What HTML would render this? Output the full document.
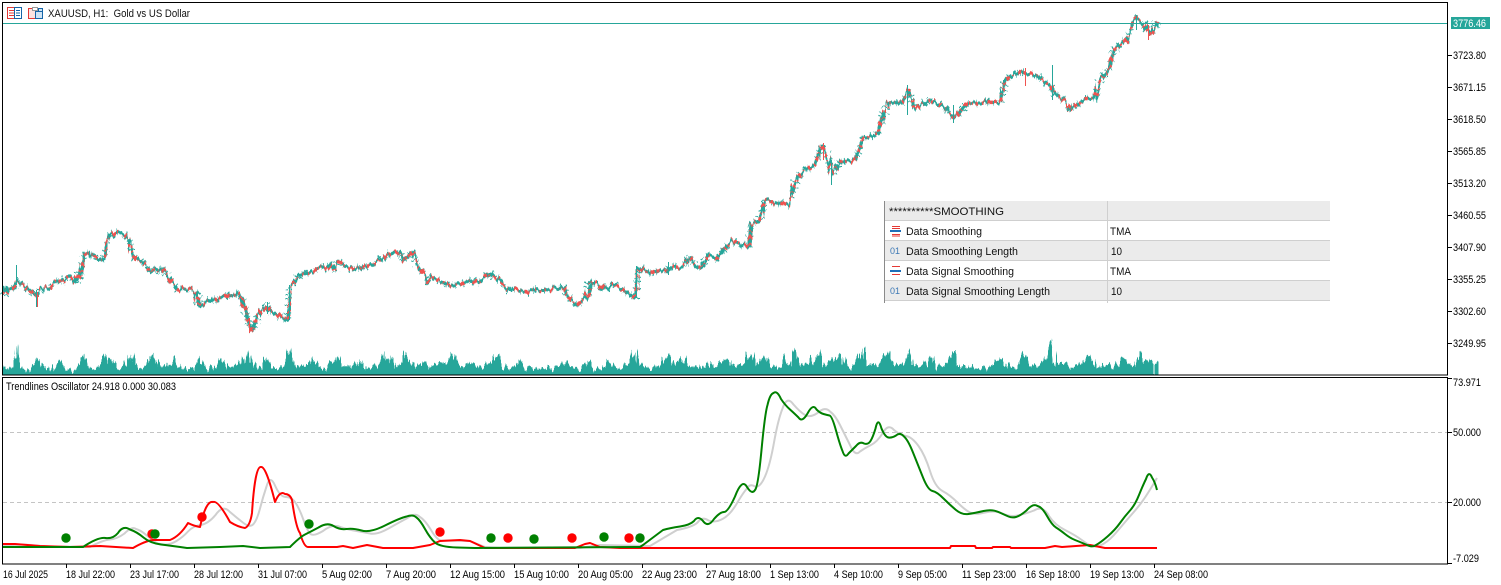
<!DOCTYPE html>
<html><head><meta charset="utf-8"><style>
html,body{margin:0;padding:0;background:#fff}
svg{display:block;font-family:"Liberation Sans",sans-serif}
text{font-size:11px;fill:#000}
.t{font-size:11px;fill:#111}
</style></head><body>
<svg width="1501" height="585" viewBox="0 0 1501 585" xmlns="http://www.w3.org/2000/svg">
<defs>
<filter id="jv" filterUnits="userSpaceOnUse" x="0" y="300" width="1300" height="100" color-interpolation-filters="sRGB">
<feTurbulence type="fractalNoise" baseFrequency="0.42 0.015" numOctaves="2" seed="4" result="n"/>
<feDisplacementMap in="SourceGraphic" in2="n" scale="13" xChannelSelector="A" yChannelSelector="G"/>
</filter>
<filter id="jp" filterUnits="userSpaceOnUse" x="0" y="0" width="1300" height="360" color-interpolation-filters="sRGB">
<feTurbulence type="fractalNoise" baseFrequency="0.3 0.012" numOctaves="2" seed="9" result="n"/>
<feDisplacementMap in="SourceGraphic" in2="n" scale="9" xChannelSelector="A" yChannelSelector="G"/>
</filter>
<clipPath id="mc"><rect x="3" y="3" width="1444" height="372"/></clipPath>
<polyline id="pr" fill="none" stroke-linejoin="bevel" points="3,295 6,290 14,288 17,283 22,283 30,291 36,296 40,289 50,288 55,283 60,282 70,276 75,283 78,278 82,263 84,254 92,254 100,260 105,258 107,241 110,234 118,232 125,235 130,242 132,252 135,258 142,262 148,268 152,272 155,268 165,270 170,280 178,290 183,288 190,289 197,292 199,305 210,302 220,298 228,296 240,295 243,302 246,312 249,326 252,332 257,316 262,308 265,305 270,312 280,317 287,320 289,300 290,285 297,280 300,275 312,272 318,268 323,268 330,265 335,272 338,262 345,266 355,270 370,265 380,260 388,255 395,252 400,252 403,262 413,252 417,265 425,275 428,282 432,278 445,283 452,285 462,282 470,280 480,282 490,273 495,278 500,280 503,285 510,290 530,290 543,290 563,287 567,297 577,305 587,297 590,283 598,283 603,290 613,285 623,290 635,298 637,268 647,273 658,270 667,273 670,267 682,268 690,257 697,267 703,267 708,255 717,258 728,245 733,241 748,247 751,226 760,220 765,200 780,203 790,205 797,178 805,170 815,165 822,145 830,165 832,175 840,162 855,160 863,138 878,133 887,103 900,102 908,90 915,110 930,100 945,108 955,118 965,104 985,102 1000,103 1005,80 1020,72 1035,75 1050,85 1055,95 1065,100 1070,110 1085,100 1095,98 1100,80 1110,68 1115,50 1125,40 1135,18 1145,25 1152,35 1157,23"/>
</defs>
<rect width="1501" height="585" fill="#fff"/>

<!-- volume -->
<g clip-path="url(#mc)">
<polygon filter="url(#jv)" fill="#26a69a" points="3,395 3,370 12,366 15,358 16,344 18,358 22,368 30,370 34,364 37,356 41,364 48,370 55,368 61,359 66,368 75,370 80,362 83,355 88,366 95,368 102,362 107,353 112,364 120,370 126,362 128,355 130,362 132,353 136,368 146,366 150,360 153,355 158,366 165,368 172,362 175,357 180,368 190,370 196,362 199,356 203,366 212,368 218,364 222,358 228,368 236,366 241,360 243,354 246,364 249,352 252,362 260,368 265,362 267,357 272,368 282,368 288,358 290,349 294,362 300,368 308,366 313,357 318,368 326,368 334,360 337,355 342,366 350,366 356,364 360,359 366,368 374,366 380,362 383,353 388,364 392,356 396,368 400,362 405,351 410,362 416,366 424,364 430,368 438,362 446,362 452,352 456,362 464,366 472,364 480,368 490,362 497,353 503,366 512,370 520,358 525,368 535,370 545,366 553,368 565,360 570,368 580,371 590,360 596,370 605,366 610,360 616,368 628,366 636,348 639,364 648,368 658,366 668,356 672,366 683,357 688,366 698,368 707,362 714,368 722,364 727,356 732,366 742,366 752,352 757,366 765,358 770,368 778,368 785,355 790,366 795,350 800,364 810,366 818,350 822,364 830,362 841,352 846,368 855,366 863,348 868,364 878,366 887,351 892,366 900,366 905,360 910,345 914,366 925,366 931,355 936,368 946,364 955,350 960,366 970,366 980,368 990,366 1002,358 1008,368 1018,366 1025,353 1031,368 1040,364 1046,358 1052,338 1055,362 1062,362 1070,366 1080,366 1090,355 1095,368 1105,364 1115,366 1125,358 1132,366 1140,353 1146,362 1152,358 1157,363 1157,395"/>
</g>

<!-- price -->
<g filter="url(#jp)">
<use href="#pr" stroke="#26a69a" stroke-width="7" stroke-dasharray="1 4 1 8 1 6 1 3"/>
<use href="#pr" stroke="#26a69a" stroke-width="3"/>
<use href="#pr" stroke="#ef5350" stroke-width="3.500" stroke-dasharray="3 3 2 4 4 3 1 5"/>
</g>
<path fill="none" stroke="#26a69a" stroke-width="1" d="M16.500 265V285M36.500 290V307M289.500 285V320M636.500 266V298M1052.500 65V100M1136.500 15V30M831.500 160V185M907.500 85V115M953.500 105V123M668.500 262V275M267.500 302V314"/>
<path fill="none" stroke="#ef5350" stroke-width="1" d="M249.500 318V333M37.500 292V307M823.500 143V160M1025.500 68V86M1148.500 25V40"/>

<!-- current price line -->
<line x1="2" y1="23.500" x2="1448" y2="23.500" stroke="#26a69a"/>

<!-- levels -->
<path stroke="#c4c4c4" stroke-dasharray="4 3" d="M3 432.500H1448M3 502.500H1448"/>

<!-- oscillator lines -->
<path fill="none" stroke="#cfcfcf" stroke-width="2" stroke-linejoin="round" d="M3 546 Q20 544 30 545 Q40 546 50 546.500 L90 547 Q103 540 110 539.500 Q117 539 124.500 533.500 Q132 526 136 529 Q140 530 145 534 Q150 538 153.500 541 Q157 544 163.500 544.500 Q170 545 176.500 541 Q183 537 188 531.500 Q193 526 200.500 525 Q208 524 215.500 515 Q223 504 230 512 Q237 518 243.500 523 Q250 528 253.500 524 Q257 520 260 508.500 Q263 497 266.500 486.500 Q270 474 275 485.500 Q280 497 286 497 Q292 497 296 503.500 Q300 510 303.500 520 Q307 530 310 533.500 Q313 537 323 531 Q333 523 341.500 527.500 Q350 530 356.500 531 Q363 532 370 533.500 Q377 535 388.500 528.500 Q400 522 407.500 518 Q415 512 420 517 Q425 520 431 530 Q437 540 441 540.500 L470 541 L485 547 L500 548 L580 548 L600 545 L650 546 L677 530 Q693 527 697.500 522.500 Q702 516 708.500 520.500 Q715 523 722.500 519 Q730 515 736.500 504 Q743 493 746.500 489 Q750 483 755 486.500 Q760 488 765 476.500 Q770 465 774 442.500 Q778 420 782.500 408.500 Q787 395 793.500 404.500 Q800 412 805 415 Q810 418 817.500 413 Q825 406 830 411.500 Q835 415 840 425 Q845 435 850 445 Q855 457 860 451.500 Q865 448 871 445 Q877 442 882.500 433.500 Q888 423 894 430 Q900 435 906 436 Q912 437 918.500 446 Q925 455 930 471 Q935 487 942.500 491 Q950 495 957.500 502.500 Q965 510 970 512.500 Q975 515 985 512.500 Q995 510 1002.500 513.500 Q1010 517 1017.500 515.500 Q1025 514 1034 510.500 Q1043 505 1049 516 Q1055 525 1065 530 Q1075 535 1082.500 540.500 Q1090 546 1094 546.500 Q1098 547 1104 543.500 Q1110 540 1117.500 531 Q1125 522 1132.500 513.500 Q1140 505 1145 497.500 Q1150 490 1157 478"/>
<path fill="none" stroke="#ff0000" stroke-width="2" stroke-linejoin="round" d="M3 544 L15 544 L40 546 L70 547 L100 546 L133 548 Q145 541 153 540 L170 540 Q180 536 188 523 Q194 526 200 527 Q206 500 213 502 Q218 500 230 522 Q238 527 245 528 Q250 526 252 513 Q255 466 261 467 Q266 466 275 502 Q280 490 285 494 Q290 494 292 500 Q296 528 300 533 Q304 547 308 547 L337 547 L343 546 L353 548 L367 545 L383 548 L413 548 L430 545 L440 541 L460 540 L470 541 L485 548 L575 548 L585 544 L590 543 L600 547 L620 548 L950 548 L951 546 L975 546 L976 548 L992 548 L993 547 L1010 547 L1011 548 L1045 548 L1055 546 L1062 547 L1090 545 L1100 547 L1105 548 L1157 548"/>
<path fill="none" stroke="#008000" stroke-width="2" stroke-linejoin="round" d="M3 547 L83 547 Q98 537 105.500 538 Q113 539 118 533 Q123 525 130 529.500 Q137 532 143.500 537.500 Q150 543 161 544.500 Q173 546 187 548 L220 547 L243 546 L260 548 L290 547 Q300 537 305 534.500 Q310 532 318.500 527.500 Q327 522 333.500 526 Q340 530 346.500 529 Q353 528 361.500 530.500 Q370 533 385 525.500 Q400 518 406.500 516.500 Q413 514 416.500 517.500 Q420 520 425 529 Q430 538 435 542.500 Q440 547 457 547.500 L475 548 L640 547 L643 545 L663 530 Q670 528 680 526.500 Q690 525 694 521 Q698 515 703 521 Q708 528 714 519 Q720 512 724 512 Q728 512 735 496.500 Q742 478 747 487 Q752 495 755 490 Q758 487 761.500 450 Q765 413 767.500 405 Q770 394 773.500 393 Q777 390 781 399 Q785 405 790 409.500 Q795 414 798.500 417.500 Q802 423 807.500 413.500 Q813 403 816.500 409.500 Q820 413 823.500 414 Q827 415 829.500 415.500 Q832 416 836 430.500 Q840 445 842.500 451 Q845 459 848.500 453.500 Q852 450 856 446 Q860 441 864 443.500 Q868 445 870.500 441 Q873 437 875.500 428.500 Q878 416 881.500 428.500 Q885 437 888.500 437.500 Q892 438 896 435.500 Q900 432 904 436.500 Q908 440 913 452.500 Q918 465 923 477.500 Q928 490 932.500 491 Q937 492 943.500 498.500 Q950 505 956 510 Q962 515 968.500 514 Q975 513 983.500 511 Q992 509 998.500 512 Q1005 515 1008.500 516.500 Q1012 518 1016 517 Q1020 516 1026.500 510.500 Q1033 503 1037.500 506 Q1042 507 1047 516 Q1052 525 1056 527.500 Q1060 530 1065 534 Q1070 538 1075 540 Q1080 542 1086 544.500 Q1092 548 1096 545 Q1100 543 1107.500 536.500 Q1115 530 1120 523 Q1125 516 1130 510.500 Q1135 505 1139 495 Q1143 485 1146 479 Q1149 470 1152 477.500 Q1155 482 1157 490"/>

<!-- dots -->
<g fill="#ff0000"><circle cx="152" cy="534" r="4.700"/><circle cx="202" cy="517" r="4.700"/><circle cx="440" cy="532" r="4.700"/><circle cx="508" cy="538" r="4.700"/><circle cx="572" cy="538" r="4.700"/><circle cx="629" cy="538" r="4.700"/></g>
<g fill="#008000"><circle cx="66" cy="538" r="4.700"/><circle cx="155" cy="534" r="4.700"/><circle cx="309" cy="524" r="4.700"/><circle cx="491" cy="538" r="4.700"/><circle cx="534" cy="539" r="4.700"/><circle cx="604" cy="537" r="4.700"/><circle cx="640" cy="538" r="4.700"/></g>

<!-- frames -->
<rect x="2.500" y="2.500" width="1445" height="372.500" fill="none" stroke="#000"/>
<rect x="2.500" y="377.500" width="1445" height="186.500" fill="none" stroke="#000"/>

<!-- top-left icons -->
<g fill="none" stroke-width="1">
<path stroke="#e53935" d="M7.500 7.500H14.500V18.500H7.500ZM9 10.500H14M9 13H14M9 15.500H14"/>
<path stroke="#1565a8" d="M14.500 7.500H21.500V18.500H14.500ZM16 10.500H20M16 13H20M16 15.500H20"/>
<path stroke="#e53935" fill="#fde3e0" d="M28.500 8.500H35.500V18.500H28.500Z"/>
<path stroke="#1565a8" fill="#cfe3f4" d="M35.500 11.500H42.500V18.500H35.500ZM38.500 11.500V8.500H42.500V11.500"/>
<path stroke="#999" d="M32.500 7.500H37.500V10.500H32.500Z" fill="#fff"/>
</g>
<text class="t" x="48" y="17" textLength="142" lengthAdjust="spacingAndGlyphs" xml:space="preserve">XAUUSD, H1:  Gold vs US Dollar</text>

<!-- price axis -->
<path stroke="#000" d="M1448 55.500h4M1448 87.500h4M1448 119.500h4M1448 151.500h4M1448 183.500h4M1448 215.500h4M1448 247.500h4M1448 279.500h4M1448 311.500h4M1448 343.500h4M1448 378.500h4M1448 432.500h4M1448 502.500h4M1448 563.500h4"/>
<rect x="1451" y="17" width="39" height="12" fill="#26a69a"/>
<text x="1453" y="27" textLength="33" lengthAdjust="spacingAndGlyphs" style="fill:#fff">3776.46</text>
<g>
<text x="1453" y="59" textLength="33" lengthAdjust="spacingAndGlyphs">3723.80</text>
<text x="1453" y="91" textLength="33" lengthAdjust="spacingAndGlyphs">3671.15</text>
<text x="1453" y="123" textLength="33" lengthAdjust="spacingAndGlyphs">3618.50</text>
<text x="1453" y="155" textLength="33" lengthAdjust="spacingAndGlyphs">3565.85</text>
<text x="1453" y="187" textLength="33" lengthAdjust="spacingAndGlyphs">3513.20</text>
<text x="1453" y="219" textLength="33" lengthAdjust="spacingAndGlyphs">3460.55</text>
<text x="1453" y="251" textLength="33" lengthAdjust="spacingAndGlyphs">3407.90</text>
<text x="1453" y="283" textLength="33" lengthAdjust="spacingAndGlyphs">3355.25</text>
<text x="1453" y="315" textLength="33" lengthAdjust="spacingAndGlyphs">3302.60</text>
<text x="1453" y="347" textLength="33" lengthAdjust="spacingAndGlyphs">3249.95</text>
<text x="1453" y="386" textLength="28" lengthAdjust="spacingAndGlyphs">73.971</text>
<text x="1453" y="436" textLength="28" lengthAdjust="spacingAndGlyphs">50.000</text>
<text x="1453" y="506" textLength="28" lengthAdjust="spacingAndGlyphs">20.000</text>
<text x="1453" y="562" textLength="26" lengthAdjust="spacingAndGlyphs">-7.029</text>
</g>

<!-- indicator label -->
<text x="6" y="390" textLength="170" lengthAdjust="spacingAndGlyphs">Trendlines Oscillator 24.918 0.000 30.083</text>

<!-- time axis -->
<path stroke="#000" d="M66.500 564v4M130.500 564v4M194.500 564v4M258.500 564v4M322.500 564v4M386.500 564v4M450.500 564v4M514.500 564v4M578.500 564v4M642.500 564v4M706.500 564v4M770.500 564v4M834.500 564v4M898.500 564v4M962.500 564v4M1026.500 564v4M1090.500 564v4M1154.500 564v4"/>
<g>
<text x="3" y="578" textLength="45" lengthAdjust="spacingAndGlyphs">16 Jul 2025</text>
<text x="66" y="578" textLength="49" lengthAdjust="spacingAndGlyphs">18 Jul 22:00</text>
<text x="130" y="578" textLength="49" lengthAdjust="spacingAndGlyphs">23 Jul 17:00</text>
<text x="194" y="578" textLength="49" lengthAdjust="spacingAndGlyphs">28 Jul 12:00</text>
<text x="258" y="578" textLength="49" lengthAdjust="spacingAndGlyphs">31 Jul 07:00</text>
<text x="322" y="578" textLength="50" lengthAdjust="spacingAndGlyphs">5 Aug 02:00</text>
<text x="386" y="578" textLength="50" lengthAdjust="spacingAndGlyphs">7 Aug 20:00</text>
<text x="450" y="578" textLength="55" lengthAdjust="spacingAndGlyphs">12 Aug 15:00</text>
<text x="514" y="578" textLength="55" lengthAdjust="spacingAndGlyphs">15 Aug 10:00</text>
<text x="578" y="578" textLength="55" lengthAdjust="spacingAndGlyphs">20 Aug 05:00</text>
<text x="642" y="578" textLength="55" lengthAdjust="spacingAndGlyphs">22 Aug 23:00</text>
<text x="706" y="578" textLength="55" lengthAdjust="spacingAndGlyphs">27 Aug 18:00</text>
<text x="770" y="578" textLength="49" lengthAdjust="spacingAndGlyphs">1 Sep 13:00</text>
<text x="834" y="578" textLength="49" lengthAdjust="spacingAndGlyphs">4 Sep 10:00</text>
<text x="898" y="578" textLength="49" lengthAdjust="spacingAndGlyphs">9 Sep 05:00</text>
<text x="962" y="578" textLength="54" lengthAdjust="spacingAndGlyphs">11 Sep 23:00</text>
<text x="1026" y="578" textLength="54" lengthAdjust="spacingAndGlyphs">16 Sep 18:00</text>
<text x="1090" y="578" textLength="54" lengthAdjust="spacingAndGlyphs">19 Sep 13:00</text>
<text x="1154" y="578" textLength="54" lengthAdjust="spacingAndGlyphs">24 Sep 08:00</text>
</g>

<!-- settings table -->
<rect x="885" y="201" width="445" height="19" fill="#ebebeb"/>
<rect x="885" y="221" width="445" height="19" fill="#fff"/>
<rect x="885" y="241" width="445" height="19" fill="#ebebeb"/>
<rect x="885" y="261" width="445" height="19" fill="#fff"/>
<rect x="885" y="281" width="445" height="19" fill="#ebebeb"/>
<path stroke="#cfcfcf" d="M885 220.500H1330M885 240.500H1330M885 260.500H1330M885 280.500H1330M885 300.500H1330M1107.500 201V303"/>
<path stroke="#8a8a8a" d="M884.500 201V303"/>
<text class="t" x="889" y="215" textLength="115" lengthAdjust="spacingAndGlyphs">**********SMOOTHING</text>
<text class="t" x="906" y="235" textLength="76" lengthAdjust="spacingAndGlyphs">Data Smoothing</text>
<text class="t" x="906" y="255" textLength="112" lengthAdjust="spacingAndGlyphs">Data Smoothing Length</text>
<text class="t" x="906" y="275" textLength="108" lengthAdjust="spacingAndGlyphs">Data Signal Smoothing</text>
<text class="t" x="906" y="295" textLength="144" lengthAdjust="spacingAndGlyphs">Data Signal Smoothing Length</text>
<text class="t" x="1110" y="235" textLength="21" lengthAdjust="spacingAndGlyphs">TMA</text>
<text class="t" x="1111" y="255" textLength="11" lengthAdjust="spacingAndGlyphs">10</text>
<text class="t" x="1110" y="275" textLength="21" lengthAdjust="spacingAndGlyphs">TMA</text>
<text class="t" x="1111" y="295" textLength="11" lengthAdjust="spacingAndGlyphs">10</text>
<path stroke="#e53935" d="M892 226.500H900M892 234.500H900M892 266.500H900M892 274.500H900"/>
<path stroke="#1e6fb8" stroke-width="2" d="M890 231H901M890 271H901"/>
<path stroke="#e53935" d="M892 228.500H900M892 236H900"/>
<text x="890" y="254" style="font-size:9px;fill:#3d79b5">01</text>
<text x="890" y="294" style="font-size:9px;fill:#3d79b5">01</text>
</svg>
</body></html>
